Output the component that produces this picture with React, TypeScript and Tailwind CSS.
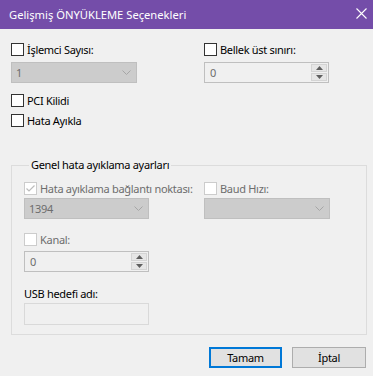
import React from 'react';

function CheckBox({
  label,
  checked = false,
  disabled = false,
}: {
  label: string;
  checked?: boolean;
  disabled?: boolean;
}) {
  return (
    <div className="flex h-[13px] items-center">
      <div
        className={`flex h-[13px] w-[13px] shrink-0 items-center justify-center border bg-white ${
          disabled ? 'border-[#cccccc]' : 'border-[#333333]'
        }`}
      >
        {checked && (
          <svg width="11" height="11" viewBox="0 0 11 11">
            <path d="M1.5 5.5 L4 8 L9.5 2.5" fill="none" stroke="#bcbcbc" strokeWidth="1.2" />
          </svg>
        )}
      </div>
      <span
        className={`ml-[3px] whitespace-nowrap leading-[13px] ${
          disabled ? 'text-[#6d6d6d]' : 'text-black'
        }`}
      >
        {label}
      </span>
    </div>
  );
}

function ComboBox({ value, width }: { value?: string; width: string }) {
  return (
    <div
      className={`flex h-[21px] ${width} items-center justify-between border border-[#bfbfbf] bg-[#cccccc] pl-[4px] pr-[5px] text-[#6d6d6d]`}
    >
      <span className="leading-[15px]">{value}</span>
      <svg width="9" height="5" viewBox="0 0 9 5">
        <path d="M0.5 0.5 L4.5 4.5 L8.5 0.5" fill="none" stroke="#a6a6a6" strokeWidth="1" />
      </svg>
    </div>
  );
}

function SpinBox({ value, width }: { value: string; width: string }) {
  return (
    <div className={`flex h-[21px] ${width} border border-[#bfbfbf] bg-[#f0f0f0]`}>
      <div className="flex flex-1 items-center pl-[5px] leading-[15px] text-[#6d6d6d]">{value}</div>
      <div className="flex w-[17px] flex-col gap-[1px] py-[1px] pr-[1px]">
        <div className="flex flex-1 items-center justify-center border border-[#d4d4d4] bg-[#e6e6e6]">
          <svg width="7" height="4" viewBox="0 0 7 4">
            <path d="M0 4 L3.5 0 L7 4 Z" fill="#5f5f5f" />
          </svg>
        </div>
        <div className="flex flex-1 items-center justify-center border border-[#d4d4d4] bg-[#e6e6e6]">
          <svg width="7" height="4" viewBox="0 0 7 4">
            <path d="M0 0 L3.5 4 L7 0 Z" fill="#5f5f5f" />
          </svg>
        </div>
      </div>
    </div>
  );
}

export default function App() {
  return (
    <div className="flex h-[376px] w-[373px] flex-col bg-[#f0f0f0] font-['Noto_Sans',sans-serif] text-[11px] tracking-[-0.3px] text-black">
      <div className="flex h-[29px] shrink-0 items-center justify-between bg-[#744da9] pl-[9px] pr-[6px] text-[11.2px] tracking-normal text-white">
        <span className="leading-[16px]">Gelişmiş ÖNYÜKLEME Seçenekleri</span>
        <svg width="11" height="11" viewBox="0 0 11 11" className="-mt-[3px]">
          <path d="M0.5 0.5 L10.5 10.5 M10.5 0.5 L0.5 10.5" stroke="#ffffff" strokeWidth="1.1" />
        </svg>
      </div>

      <div className="flex flex-col pl-[11px] pr-[6px] pt-[14px]">
        <div className="flex">
          <div className="flex w-[193px] flex-col">
            <CheckBox label="İşlemci Sayısı:" />
            <div className="mt-[6px]">
              <ComboBox value="1" width="w-[126px]" />
            </div>
          </div>
          <div className="flex flex-col">
            <CheckBox label="Bellek üst sınırı:" />
            <div className="mt-[6px]">
              <SpinBox value="0" width="w-[125px]" />
            </div>
          </div>
        </div>

        <div className="mt-[11px]">
          <CheckBox label="PCI Kilidi" />
        </div>
        <div className="mt-[7px]">
          <CheckBox label="Hata Ayıkla" />
        </div>

        <fieldset className="mt-[31px] w-[356px] border border-[#dcdcdc] pb-[9px] pl-[12px] pt-[10px]">
          <legend className="ml-[5px] px-[2px] leading-[14px]">Genel hata ayıklama ayarları</legend>
          <div className="flex">
            <div className="flex w-[180px] flex-col">
              <CheckBox label="Hata ayıklama bağlantı noktası:" checked disabled />
              <div className="mt-[3px]">
                <ComboBox value="1394" width="w-[125px]" />
              </div>
            </div>
            <div className="flex flex-col">
              <CheckBox label="Baud Hızı:" disabled />
              <div className="mt-[3px]">
                <ComboBox width="w-[126px]" />
              </div>
            </div>
          </div>
          <div className="mt-[14px]">
            <CheckBox label="Kanal:" disabled />
          </div>
          <div className="mt-[5px]">
            <SpinBox value="0" width="w-[125px]" />
          </div>
          <div className="mt-[14px] leading-[15px]">USB hedefi adı:</div>
          <div className="mt-[2px] h-[22px] w-[125px] border border-[#d9d9d9] bg-[#f0f0f0]" />
        </fieldset>

        <div className="mt-[12px] flex justify-end gap-[10px] pr-[1px]">
          <button className="h-[21px] w-[73px] border-2 border-[#0078d7] bg-[#e1e1e1] leading-[15px]">
            Tamam
          </button>
          <button className="h-[21px] w-[74px] border border-[#adadad] bg-[#e1e1e1] leading-[15px]">
            İptal
          </button>
        </div>
      </div>
    </div>
  );
}
